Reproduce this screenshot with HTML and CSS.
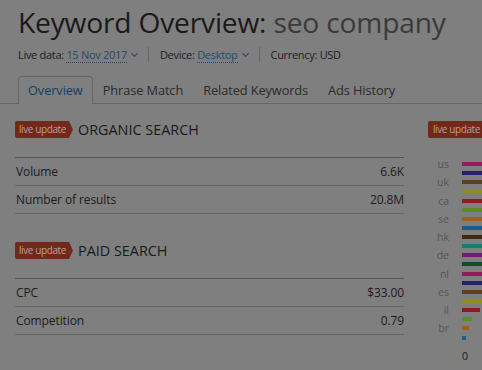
FILE: index.html
```html
<!DOCTYPE html>
<html lang="en">
<head>
    <meta charset="UTF-8">
    <title>Keyword Overview: seo company</title>
    <link rel="stylesheet" href="styles.css">
</head>
<body>
    <div class="header">
        <h1>Keyword Overview: <span class="phrase">seo company</span></h1>
        <div class="meta">
            <span class="meta-item">Live data: <a class="drop">15 Nov 2017</a><span class="caret"></span></span>
            <span class="sep"></span>
            <span class="meta-item">Device: <a class="drop">Desktop</a><span class="caret"></span></span>
            <span class="sep"></span>
            <span class="meta-item">Currency: USD</span>
        </div>
    </div>

    <div class="tabs">
        <div class="tab active">Overview</div>
        <div class="tab">Phrase Match</div>
        <div class="tab">Related Keywords</div>
        <div class="tab">Ads History</div>
    </div>

    <div class="content">
        <div class="main">
            <div class="section-title"><span class="badge">live update</span>ORGANIC SEARCH</div>
            <table class="stats">
                <tr><td>Volume</td><td class="num">6.6K</td></tr>
                <tr><td>Number of results</td><td class="num">20.8M</td></tr>
            </table>

            <div class="section-title paid"><span class="badge">live update</span>PAID SEARCH</div>
            <table class="stats">
                <tr><td>CPC</td><td class="num">$33.00</td></tr>
                <tr><td>Competition</td><td class="num">0.79</td></tr>
            </table>
        </div>

        <div class="side">
            <span class="badge plain">live update</span>
            <div class="chart">
                <div class="group"><span class="lbl">us</span><div class="bars"><i class="c1"></i><i class="c2"></i></div></div>
                <div class="group"><span class="lbl">uk</span><div class="bars"><i class="c3"></i><i class="c4"></i></div></div>
                <div class="group"><span class="lbl">ca</span><div class="bars"><i class="c5"></i><i class="c6"></i></div></div>
                <div class="group"><span class="lbl">se</span><div class="bars"><i class="c7"></i><i class="c8"></i></div></div>
                <div class="group"><span class="lbl">hk</span><div class="bars"><i class="c9"></i><i class="c10"></i></div></div>
                <div class="group"><span class="lbl">de</span><div class="bars"><i class="c11"></i><i class="c12"></i></div></div>
                <div class="group"><span class="lbl">nl</span><div class="bars"><i class="c1"></i><i class="c2"></i></div></div>
                <div class="group"><span class="lbl">es</span><div class="bars"><i class="c3"></i><i class="c4"></i></div></div>
                <div class="group"><span class="lbl">il</span><div class="bars"><i class="c5" style="width:18px"></i><i class="c6" style="width:10px"></i></div></div>
                <div class="group"><span class="lbl">br</span><div class="bars"><i class="c7" style="width:7px"></i><i class="c8" style="width:4px"></i></div></div>
                <div class="axis">0</div>
            </div>
        </div>
    </div>
</body>
</html>
```
FILE: styles.css
```css
body {
    margin: 0;
    background-color: #7f7f7f;
    font-family: "Open Sans", "DejaVu Sans", sans-serif;
    color: #1c1c1c;
    overflow: hidden;
    width: 482px;
    height: 370px;
}
.header {
    padding: 4px 0 0 18px;
}
h1 {
    margin: 0;
    font-size: 28.2px;
    font-weight: normal;
    line-height: 36px;
    letter-spacing: -0.2px;
    color: #1a1a1a;
    white-space: nowrap;
}
h1 .phrase {
    color: #3a3a3a;
}
.meta {
    display: flex;
    align-items: center;
    font-size: 11px;
    letter-spacing: -0.3px;
    height: 28px;
    color: #1c1c1c;
}
.meta-item {
    white-space: nowrap;
}
.drop {
    color: #1f4a70;
    border-bottom: 1px dotted #1f4a70;
}
.caret {
    display: inline-block;
    width: 4px;
    height: 4px;
    margin: 0 0 3px 5px;
    border-right: 1px solid #1f4a70;
    border-bottom: 1px solid #1f4a70;
    transform: rotate(45deg);
}
.sep {
    width: 1px;
    height: 15px;
    background-color: #666;
    margin: 0 11px;
}
.tabs {
    display: flex;
    padding-left: 18px;
    border-bottom: 1px solid #666;
    height: 27px;
    margin-top: 8px;
}
.tab {
    font-size: 12.8px;
    letter-spacing: -0.1px;
    color: #2a2a2a;
    padding: 0 9px;
    line-height: 26px;
    border: 1px solid transparent;
    border-bottom: none;
    border-radius: 4px 4px 0 0;
}
.tab.active {
    color: #153d60;
    background-color: #7f7f7f;
    border-color: #666;
    height: 27px;
    margin-bottom: -1px;
}
.content {
    display: flex;
    padding-left: 15px;
}
.main {
    width: 389px;
    flex-shrink: 0;
}
.section-title {
    display: flex;
    align-items: center;
    font-size: 14.4px;
    color: #1a1a1a;
    margin-top: 17px;
    height: 17px;
}
.section-title.paid {
    margin-top: 28px;
}
.badge {
    display: inline-block;
    background-color: #70291b;
    color: #bf9f97;
    font-size: 10px;
    letter-spacing: -0.4px;
    line-height: 17px;
    height: 17px;
    padding: 0 7px 0 4px;
    margin-right: 5px;
    border-radius: 2px;
    clip-path: polygon(0 0, calc(100% - 4px) 0, 100% 50%, calc(100% - 4px) 100%, 0 100%);
    white-space: nowrap;
}
.badge.plain {
    display: block;
    clip-path: none;
    padding: 0 5px;
    margin: 0;
}
.stats {
    width: 100%;
    border-collapse: collapse;
    margin-top: 19px;
    font-size: 12px;
    letter-spacing: -0.1px;
    border-top: 1px solid #555;
}
.stats td {
    height: 27px;
    padding: 0 0 0 1px;
    border-bottom: 1px solid #666;
}
.stats td.num {
    text-align: right;
    padding: 0;
}
.side {
    margin-left: 24px;
    padding-top: 17px;
    width: 80px;
    flex-shrink: 0;
}
.chart {
    margin-top: 24px;
}
.group {
    display: flex;
    height: 18.28px;
}
.lbl {
    width: 21px;
    text-align: right;
    font-size: 10.5px;
    color: #555;
    line-height: 4px;
    margin-right: 13px;
}
.bars i {
    display: block;
    width: 40px;
    height: 4px;
    margin-bottom: 5.14px;
}
.axis {
    font-size: 10.5px;
    color: #1c1c1c;
    margin: 4px 0 0 34px;
}
.c1 { background-color: #931d5a; }
.c2 { background-color: #25226a; }
.c3 { background-color: #5c4128; }
.c4 { background-color: #8e8d1f; }
.c5 { background-color: #8b1c24; }
.c6 { background-color: #5f8a29; }
.c7 { background-color: #a0601b; }
.c8 { background-color: #1b5c8a; }
.c9 { background-color: #3d2914; }
.c10 { background-color: #12806f; }
.c11 { background-color: #6a1f6e; }
.c12 { background-color: #19472b; }
```
